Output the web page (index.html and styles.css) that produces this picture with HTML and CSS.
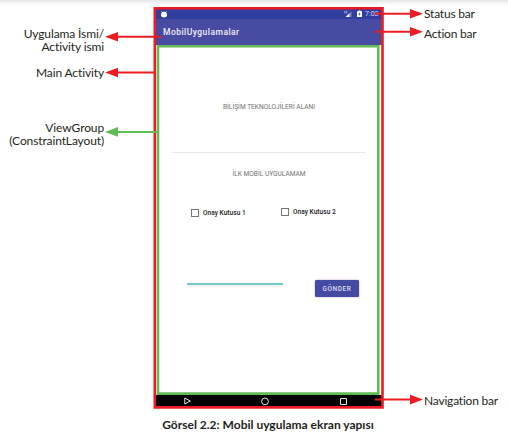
FILE: index.html
```html
<!DOCTYPE html>
<html lang="tr">
<head>
<meta charset="utf-8">
<title>Görsel 2.2</title>
<link rel="stylesheet" href="styles.css">
</head>
<body>
<figure class="figure">
  <div class="diagram">
    <div class="labels labels-left">
      <div class="label label-app"><p>Uygulama İsmi/</p><p>Activity ismi</p></div>
      <div class="label label-main"><p>Main Activity</p></div>
      <div class="label label-group"><p>ViewGroup</p><p>(ConstraintLayout)</p></div>
    </div>
    <div class="phone">
      <div class="statusbar">
        <svg class="droid" width="6" height="7" viewBox="0 0 6 7"><path d="M.5 0L1.6 1.1Q3 .6 4.4 1.1L5.5 0V1L5.1 1.7Q6 2.4 6 3.6V4.5Q5.8 6.5 3 6.5T0 4.5V3.6Q0 2.4.9 1.7L.5 1Z" fill="#fff"/><path d="M1.5 2.7h.8v.7h-.8zM3.7 2.7h.8v.7h-.8z" fill="#8590c8"/></svg>
        <svg class="signal" width="8" height="8" viewBox="0 0 8 8"><path d="M.6 1v2.2M2 1.2h1.6M2 1v2.2h1.5" stroke="#b5bce0" stroke-width=".7" fill="none"/><path d="M7.5 1.2V7H1.7Z" fill="#7883c1"/><path d="M5.4 3.3V7H1.7Z" fill="#fff"/></svg>
        <svg class="battery" width="5" height="8" viewBox="0 0 5 8"><path d="M1.5 .5h2v.8H5V7H0V1.3h1.5z" fill="#fff"/><path d="M2.9 2L1.3 4.4h1L2 6.1 3.7 3.7h-1z" fill="#303f9f"/></svg>
        <span class="clock">7:02</span>
      </div>
      <div class="actionbar">MobilUygulamalar</div>
      <div class="content">
        <div class="heading"><span>BİLİŞİM TEKNOLOJİLERİ ALANI</span></div>
        <div class="subheading"><span>İLK MOBİL UYGULAMAM</span></div>
        <div class="checks">
          <div class="check"><i class="box"></i><span>Onay Kutusu 1</span></div>
          <div class="check second"><i class="box"></i><span>Onay Kutusu 2</span></div>
        </div>
        <div class="form"><div class="field"></div><div class="button">GÖNDER</div></div>
      </div>
      <div class="navbar">
        <svg width="225" height="11" viewBox="0 0 225 11"><g fill="none" stroke="#e8e8e8" stroke-width="1"><path d="M28.8 3V9L34.3 6Z"/><circle cx="109" cy="6.4" r="3.4"/><path d="M184.5 3.5h6v6h-6z"/></g></svg>
      </div>
    </div>
    <div class="labels labels-right">
      <div class="label label-status"><p>Status bar</p></div>
      <div class="label label-action"><p>Action bar</p></div>
      <div class="label label-nav"><p>Navigation bar</p></div>
    </div>
    <svg class="arrows" width="508" height="440" viewBox="0 0 508 440">
      <g fill="none" stroke-width="2.600">
        <path d="M154.800 8.200H382.500V407.400H154.800Z" stroke="#ed1c24"/>
        <path d="M158 46.300H378.300V393.600H158Z" stroke="#62bb54"/>
      </g>
      <g fill="#ed1c24">
        <path d="M105 36.700L118 31.900V35.800H161.500V37.700H118V41.500Z"/>
        <path d="M105 72.500L118 67.700V71.600H155V73.500H118V77.300Z"/>
        <path d="M423 13.800L410 9V12.800H375V14.800H410V18.600Z"/>
        <path d="M423 31.800L410 27V30.800H375V32.800H410V36.600Z"/>
        <path d="M423 399.600L410 394.800V398.600H375V400.600H410V404.400Z"/>
      </g>
      <path d="M105 131.900L118 127.100V130.900H158V132.900H118V136.700Z" fill="#62bb54"/>
    </svg>
  </div>
  <figcaption class="caption"><span>Görsel 2.2: Mobil uygulama ekran yapısı</span></figcaption>
</figure>
</body>
</html>
```
FILE: styles.css
```css
* { box-sizing: border-box; }
body { margin: 0; background: #fff; }
p { margin: 0; }
.figure {
  margin: 0; width: 508px; height: 440px; padding-top: 7px; position: relative; overflow: hidden;
  background: linear-gradient(#e5e5e5, #f5f5f5 3px, #fff 6px) no-repeat top / 100% 6px;
  font-family: Lato, sans-serif; color: #231f20;
}
.diagram { display: grid; grid-template-columns: 154px 230px 124px; height: 402px; }
.labels { display: flex; flex-direction: column; }
.label { font-size: 12px; line-height: 13px; letter-spacing: -.2px; white-space: nowrap; }
.labels-left { text-align: right; padding-right: 50px; }
.labels-left .label { letter-spacing: -.12px; }
.label-app { margin-top: 20px; }
.label-main { margin-top: 13px; }
.label-group { margin-top: 42px; }
.labels-right { padding-left: 40px; }
.label-action { margin-top: 7px; }
.label-nav { margin-top: 354px; }
.phone {
  padding: 2px; height: 401px;
  display: flex; flex-direction: column; font-family: Roboto, sans-serif;
}
.statusbar { height: 10px; background: #303f9f; display: flex; align-items: center; color: #d5d9ee; }
.droid { margin-left: 5px; }
.signal { margin-left: 177px; }
.battery { margin-left: 5px; }
.clock { font-size: 7px; margin-left: 3px; line-height: 9px; }
.actionbar { height: 26px; background: #474ca2; color: #f6effa; font-size: 8.500px; font-weight: 500; line-height: 26px; padding-left: 7px; letter-spacing: .47px; }
.content { height: 350px; margin: 0 1px; padding: 3px 2px 2px; background: #fff; }
.heading { height: 105px; margin: 0 13px; border-bottom: 1px solid #e6e6e6; text-align: center; padding-top: 53px; font-size: 6.600px; line-height: 12px; color: #707070; }
.subheading { text-align: center; font-size: 6.600px; line-height: 12px; color: #707070; padding-top: 15px; height: 50px; }
.checks { display: flex; height: 20px; padding: 5px 0 0 32px; color: #222; font-size: 6.500px; font-weight: 500; letter-spacing: .05px; }
.check { display: flex; align-items: center; gap: 4px; height: 10px; width: 90px; }
.second { margin-top: -1px; }
.box { width: 8px; height: 8px; border: 1px solid #737777; }
.form { display: flex; margin-top: 57px; padding-left: 28px; align-items: flex-start; }
.field { width: 96px; height: 2px; background: #73cbc8; margin-top: 3px; box-shadow: 0 2px 2px #eee; }
.button { margin-left: 32px; width: 44px; height: 17px; border-radius: 1.500px; background: #444aa1; color: #dedff2; font-size: 6.500px; line-height: 18px; text-align: center; font-weight: 500; letter-spacing: .55px; box-shadow: 0 0 1.500px #99649b; }
.navbar { height: 11px; background: #000; }
.navbar svg { display: block; }
.arrows { position: absolute; left: 0; top: 0; }
.caption { text-align: center; font-size: 12px; font-weight: 700; line-height: 16px; padding-top: 8px; padding-left: 28px; }
```
